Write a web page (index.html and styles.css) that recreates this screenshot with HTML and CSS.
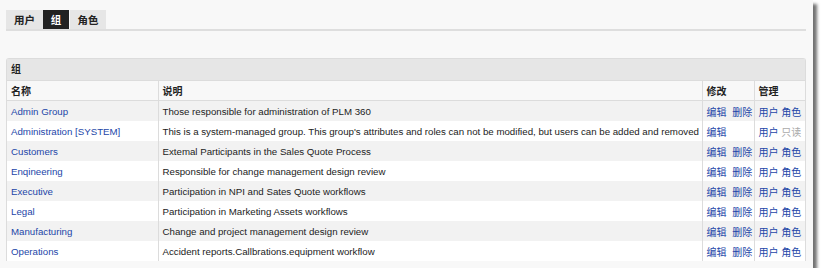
FILE: index.html
```html
<!doctype html>
<html lang="zh">
<head>
  <meta charset="utf-8">
  <title>组</title>
  <link rel="stylesheet" href="styles.css">
</head>
<body>

<div class="window">
  <div class="tabs">
    <a class="tab t-users">用户</a>
    <a class="tab t-groups active">组</a>
    <a class="tab t-roles">角色</a>
  </div>

  <div class="panel">
    <div class="panel-title zh">组</div>
    <table class="groups">
      <colgroup>
        <col class="c-name">
        <col class="c-desc">
        <col class="c-edit">
        <col class="c-manage">
      </colgroup>
      <tr class="head zh">
        <td>名称</td>
        <td>说明</td>
        <td>修改</td>
        <td>管理</td>
      </tr>
      <tr class="odd">
        <td><a href="#">Admin Group</a></td>
        <td>Those responsible for administration of PLM 360</td>
        <td class="zh edit"><a href="#">编辑</a> <a href="#">删除</a></td>
        <td class="zh"><a href="#">用户</a> <a href="#">角色</a></td>
      </tr>
      <tr>
        <td><a href="#">Administration [SYSTEM]</a></td>
        <td>This is a system-managed group. This group's attributes and roles can not be modified, but users can be added and removed</td>
        <td class="zh edit"><a href="#">编辑</a></td>
        <td class="zh"><a href="#">用户</a> <span class="readonly">只读</span></td>
      </tr>
      <tr class="odd">
        <td><a href="#">Customers</a></td>
        <td>Extemal Participants in the Sales Quote Process</td>
        <td class="zh edit"><a href="#">编辑</a> <a href="#">删除</a></td>
        <td class="zh"><a href="#">用户</a> <a href="#">角色</a></td>
      </tr>
      <tr>
        <td><a href="#">Enqineering</a></td>
        <td>Responsible for change management design review</td>
        <td class="zh edit"><a href="#">编辑</a> <a href="#">删除</a></td>
        <td class="zh"><a href="#">用户</a> <a href="#">角色</a></td>
      </tr>
      <tr class="odd">
        <td><a href="#">Executive</a></td>
        <td>Participation in NPI and Sates Quote workflows</td>
        <td class="zh edit"><a href="#">编辑</a> <a href="#">删除</a></td>
        <td class="zh"><a href="#">用户</a> <a href="#">角色</a></td>
      </tr>
      <tr>
        <td><a href="#">Legal</a></td>
        <td>Participation in Marketing Assets workflows</td>
        <td class="zh edit"><a href="#">编辑</a> <a href="#">删除</a></td>
        <td class="zh"><a href="#">用户</a> <a href="#">角色</a></td>
      </tr>
      <tr class="odd">
        <td><a href="#">Manufacturing</a></td>
        <td>Change and project management design review</td>
        <td class="zh edit"><a href="#">编辑</a> <a href="#">删除</a></td>
        <td class="zh"><a href="#">用户</a> <a href="#">角色</a></td>
      </tr>
      <tr>
        <td><a href="#">Operations</a></td>
        <td>Accident reports.Callbrations.equipment workflow</td>
        <td class="zh edit"><a href="#">编辑</a> <a href="#">删除</a></td>
        <td class="zh"><a href="#">用户</a> <a href="#">角色</a></td>
      </tr>
    </table>
  </div>
</div>

</body>
</html>
```

FILE: styles.css
```css
body {
    margin: 0;
    background: #fff;
    font-family: "Liberation Sans", Arial, "Noto Sans CJK SC", sans-serif;
    font-size: 9.7px;
    color: #222;
}

.zh {
    font-size: 10px;
}

.window {
    width: 813px;
    height: 268px;
    background: #f8f8f8;
    box-shadow: 4px 4px 3px rgba(0, 0, 0, 0.55);
    padding: 10px 7px 0 6px;
    box-sizing: border-box;
}

.tabs {
    display: flex;
    height: 19px;
    border-bottom: 2px solid #dedede;
}
.tab {
    display: flex;
    align-items: center;
    justify-content: center;
    background: #e6e6e6;
    color: #222;
    font-size: 10.5px;
    font-weight: bold;
}
.t-users {
    width: 37px;
}
.t-groups {
    width: 26px;
}
.t-roles {
    width: 36px;
    margin-left: 1px;
}
.tab.active {
    background: #222;
    color: #fff;
}

.panel {
    margin-top: 27px;
    border: 1px solid #dcdcdc;
    border-bottom: 0;
    border-radius: 3px 3px 0 0;
    background: #f8f8f8;
}
.panel-title {
    height: 21px;
    line-height: 21px;
    padding-left: 4px;
    background: #e6e6e6;
    border-bottom: 1px solid #dcdcdc;
    font-weight: bold;
}

table.groups {
    width: 100%;
    table-layout: fixed;
    border-collapse: collapse;
}
table.groups td {
    height: 20px;
    padding: 0 4px;
    white-space: nowrap;
    overflow: hidden;
    border-left: 1px solid #dcdcdc;
}
table.groups td:first-child {
    border-left: 0;
}
table.groups tr.head td {
    font-weight: bold;
    height: 19px;
    border-bottom: 1px solid #dcdcdc;
}
table.groups tr {
    background: #fff;
}
table.groups tr.odd {
    background: #f2f2f2;
}
table.groups tr.head {
    background: #f8f8f8;
}
.c-name {
    width: 151px;
}
.c-edit {
    width: 52px;
}
.c-manage {
    width: 51px;
}

a {
    color: #2346a8;
    text-decoration: none;
}
.edit a + a {
    margin-left: 3px;
}
.readonly {
    color: #aaa;
}
```
